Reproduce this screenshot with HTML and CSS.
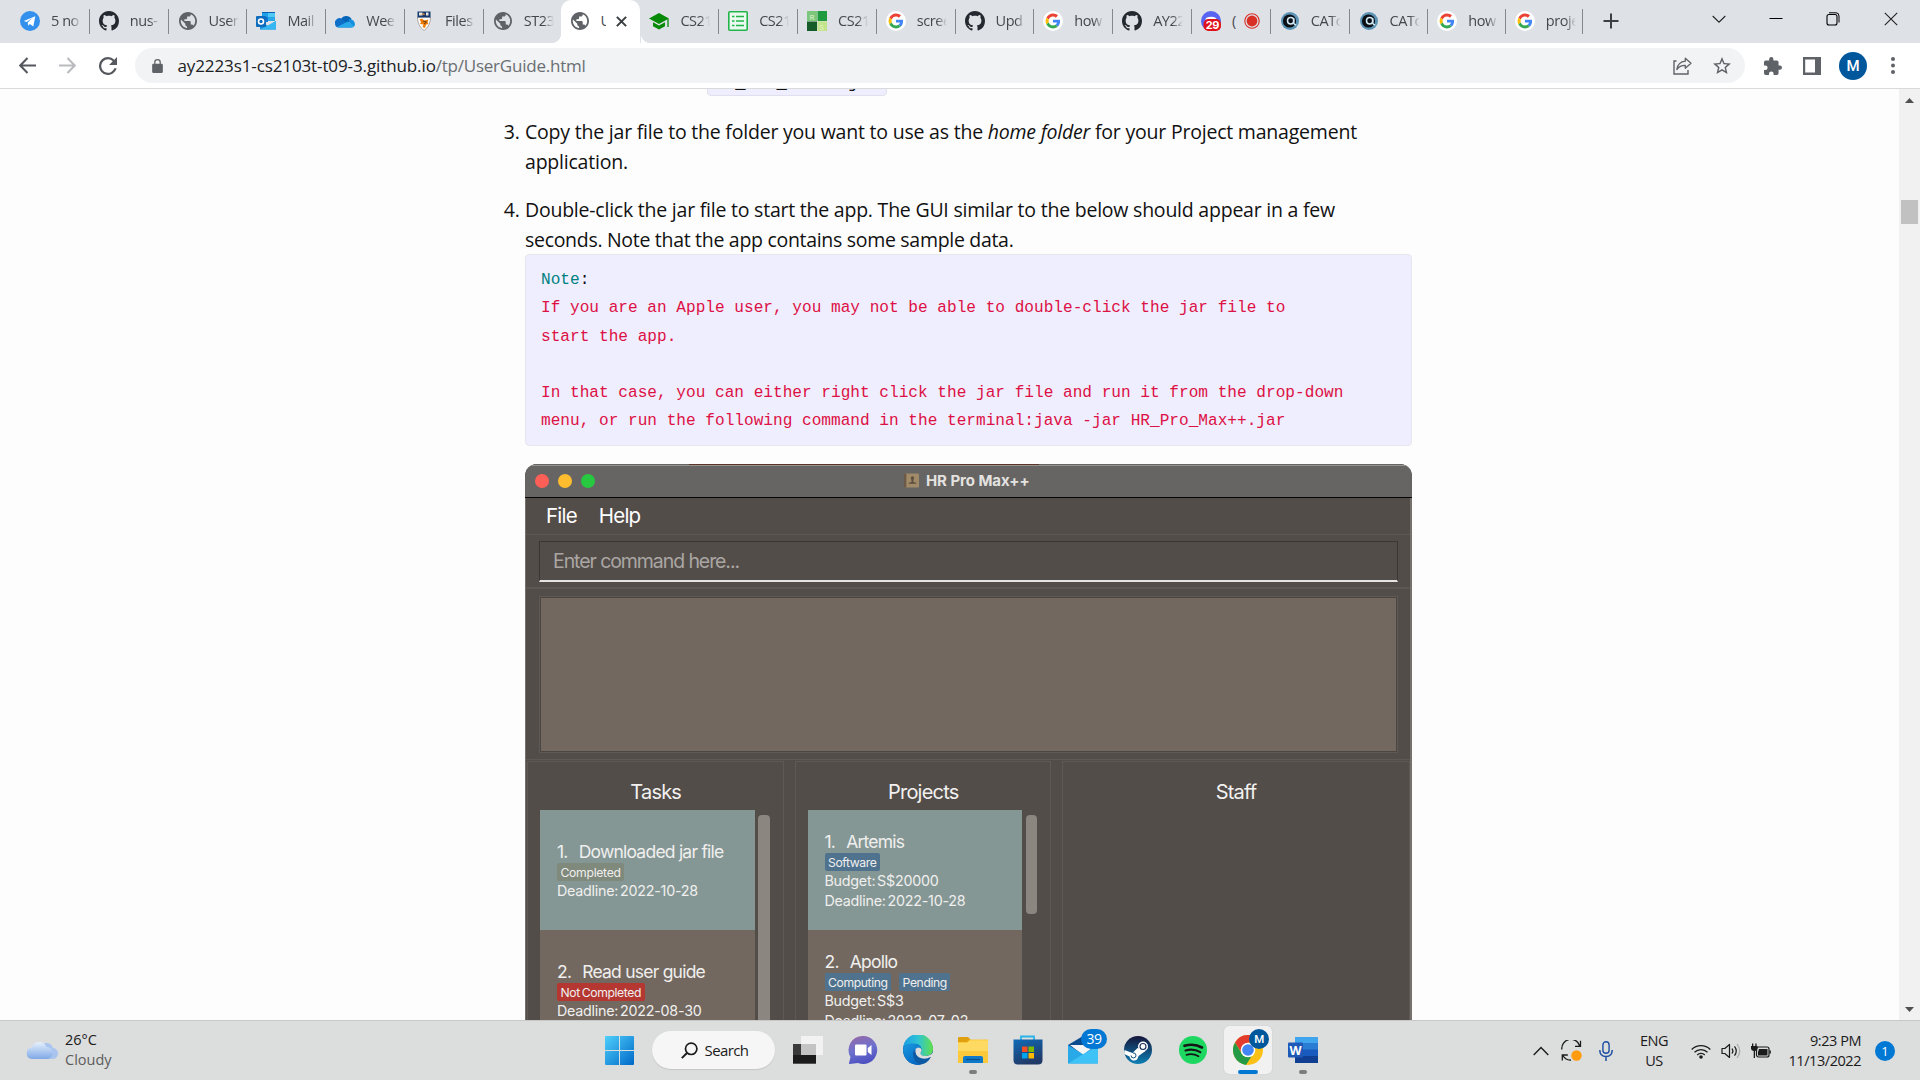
FILE: index.html
```html
<!DOCTYPE html>
<html lang="en">
<head>
<meta charset="utf-8">
<title>User Guide</title>
<link rel="stylesheet" href="styles.css">
</head>
<body>
<svg class="defs" aria-hidden="true">
  <symbol id="globe" viewBox="2 2 20 20"><path fill="#5f6368" d="M12 2C6.48 2 2 6.48 2 12s4.480 10 10 10 10-4.480 10-10S17.520 2 12 2zm-1 17.930c-3.950-.49-7-3.850-7-7.930 0-.62.08-1.210.21-1.790L9 15v1c0 1.100.9 2 2 2v1.930zm6.900-2.540c-.26-.81-1-1.390-1.900-1.390h-1v-3c0-.55-.45-1-1-1H8v-2h2c.55 0 1-.45 1-1V7h2c1.100 0 2-.9 2-2v-.41c2.930 1.190 5 4.060 5 7.410 0 2.080-.8 3.970-2.100 5.390z"/></symbol>
  <symbol id="github" viewBox="0 0 16 16"><path fill="#24292f" d="M8 0C3.58 0 0 3.58 0 8c0 3.54 2.29 6.53 5.47 7.59.4.07.55-.17.55-.38 0-.19-.01-.82-.01-1.49-2.01.37-2.53-.49-2.69-.94-.09-.23-.48-.94-.82-1.13-.28-.15-.68-.52-.01-.53.63-.01 1.08.58 1.23.82.72 1.21 1.87.87 2.33.66.07-.52.28-.87.51-1.07-1.78-.2-3.64-.89-3.64-3.95 0-.87.31-1.59.82-2.15-.08-.2-.36-1.02.08-2.12 0 0 .67-.21 2.2.82.64-.18 1.32-.27 2-.27s1.36.09 2 .27c1.53-1.04 2.2-.82 2.2-.82.44 1.1.16 1.92.08 2.12.51.56.82 1.27.82 2.15 0 3.07-1.87 3.75-3.65 3.95.29.25.54.73.54 1.48 0 1.07-.01 1.93-.01 2.2 0 .21.15.46.55.38A8.010 8.010 0 0 0 16 8c0-4.420-3.580-8-8-8z"/></symbol>
  <symbol id="google" viewBox="0 0 20 20"><circle cx="10" cy="10" r="10" fill="#fff"/><g transform="translate(2.600 2.600) scale(.308)"><path fill="#ea4335" d="M24 9.500c3.540 0 6.710 1.220 9.210 3.600l6.850-6.850C35.900 2.380 30.470 0 24 0 14.620 0 6.510 5.380 2.560 13.220l7.980 6.190C12.430 13.720 17.740 9.500 24 9.500z"/><path fill="#4285f4" d="M46.980 24.550c0-1.570-.15-3.090-.38-4.550H24v9.020h12.940c-.58 2.960-2.260 5.480-4.780 7.180l7.730 6c4.510-4.180 7.090-10.360 7.090-17.650z"/><path fill="#fbbc05" d="M10.530 28.590c-.48-1.450-.76-2.990-.76-4.590s.27-3.140.76-4.590l-7.980-6.190C.92 16.460 0 20.120 0 24s.92 7.540 2.560 10.780z"/><path fill="#34a853" d="M24 48c6.480 0 11.930-2.130 15.890-5.810l-7.730-6c-2.150 1.450-4.920 2.300-8.160 2.300-6.260 0-11.570-4.220-13.470-9.910l-7.980 6.190C6.510 42.620 14.620 48 24 48z"/></g></symbol>
  <symbol id="catcher" viewBox="0 0 20 20"><circle cx="10" cy="10" r="9" fill="#5b93b5"/><circle cx="9.500" cy="10" r="6.600" fill="#0b1016"/><circle cx="10.700" cy="9.800" r="3.200" fill="none" stroke="#d3eaf6" stroke-width="1.500"/><path d="M13.600 7v5q.5 1.500 2.600 2" stroke="#d3eaf6" stroke-width="1.500" fill="none"/></symbol>
</svg>

<header class="tabstrip">
  <div class="tab"><svg class="fav" viewBox="0 0 20 20"><circle cx="10" cy="10" r="10" fill="#3390ec"/><path fill="#fff" d="M3.800 9.900 15.300 5.200l-2 10.300-3.400-2.600-1.800 1.800-.3-3.200 4.800-4.400-6 3.900z"/></svg><span class="label">5 no</span></div>
  <div class="tab"><svg class="fav"><use href="#github"/></svg><span class="label">nus-</span></div>
  <div class="tab"><svg class="fav globe"><use href="#globe"/></svg><span class="label">User</span></div>
  <div class="tab"><svg class="fav" viewBox="0 0 20 20"><path fill="#0a5fb4" d="M6 1h13v9H6z"/><path fill="#1fa0e8" d="M6 2h6v4H6z"/><path fill="#50c8f4" d="M12 2h7v4h-7z"/><path fill="#0f78d4" d="M6 6h6v5H6z"/><path fill="#28a8ea" d="M12 6h7v4h-7z"/><path fill="#1a91df" d="m4 10 8 5 8-5v8.500H4z"/><path fill="#35b8f1" d="m4 18.500 16-8.500v8.500z"/><rect y="5" width="10" height="11" rx="1" fill="#0f6cbd"/><circle cx="5" cy="10.500" r="2.500" fill="none" stroke="#fff" stroke-width="1.600"/></svg><span class="label">Mail</span></div>
  <div class="tab"><svg class="fav" viewBox="0 0 20 20"><path fill="#0364b8" d="M6 8a6 6 0 0 1 10.500 0L13 14z"/><path fill="#1490df" d="M13.500 8.500A5 5 0 0 1 20 13a3.500 3.500 0 0 1-3 3.500z"/><path fill="#0f6fc8" d="M0 12.500A4.500 4.500 0 0 1 7 8l10 8.500H4a4 4 0 0 1-4-4z"/><path fill="#28a8ea" d="m2 16 11-5.500 6 4.500q-1 1.500-2.500 1.500H4z"/></svg><span class="label">Wee</span></div>
  <div class="tab"><svg class="fav" viewBox="0 0 20 20"><path fill="#fff" stroke="#8a7a68" stroke-width=".6" d="M3.500 6h13q0 9-6.500 13.500Q3.500 15 3.500 6z"/><path fill="#17386c" d="M3.500.5h13v6h-13z"/><path fill="#e8e4dc" d="M5 1.500h3.500v3H5zm7 0h2.500v3H12z"/><path fill="#d98a3a" d="M7 3.500 10 2l1 2z"/><path fill="#ef7c00" d="M5.500 8.500 8 7.500l2 2 4.500-1-1 2.500 1 2-2.500.8-1 3.200-2.500-1 1-2.500-3.500-.5 1-2z"/><path stroke="#3c2a18" stroke-width=".8" d="m9 10 3.500 1L10 13" fill="none"/></svg><span class="label">Files</span></div>
  <div class="tab last-before"><svg class="fav globe"><use href="#globe"/></svg><span class="label">ST23</span></div>
  <div class="tab active"><svg class="fav globe"><use href="#globe"/></svg><span class="label">U</span><svg class="tab-close" viewBox="0 0 10 10"><path d="m.8.8 8.400 8.400m0-8.400L.8 9.200" stroke="#3c4043" stroke-width="1.900"/></svg></div>
  <div class="tab"><svg class="fav" viewBox="0 0 20 20"><path fill="#078a07" d="m10 2 10 5.500-10 5.500L0 7.500z"/><path fill="#078a07" d="M4 11.200 10 14.500l6-3.300v4L10 18.500 4 15.200z"/><path stroke="#078a07" stroke-width="1.300" d="M19 8v8"/></svg><span class="label">CS21</span></div>
  <div class="tab"><svg class="fav" viewBox="0 0 20 20"><rect x=".8" y=".8" width="18.400" height="18.400" rx="1" fill="#eafaf0" stroke="#22b549" stroke-width="1.600"/><path stroke="#22b549" stroke-width="1.600" d="M4 5.500h2.500M4 10h2.500M4 14.500h2.500M8 5.500h8M8 10h8M8 14.500h8"/></svg><span class="label">CS21</span></div>
  <div class="tab"><svg class="fav" viewBox="0 0 20 20"><path fill="#7cc77c" d="M0 0h10v10H0z"/><path fill="#1f9a3f" d="M10.500 0H20v10h-9.500z"/><path fill="#155c29" d="M0 10.500h10V20H0z"/><path fill="#c2e58c" d="M10.500 10.500H20V20h-9.500z"/><text class="rs" x="2.500" y="8.500">R</text><text class="rs" x="12.500" y="18.600">S</text></svg><span class="label">CS21</span></div>
  <div class="tab"><svg class="fav"><use href="#google"/></svg><span class="label">scree</span></div>
  <div class="tab"><svg class="fav"><use href="#github"/></svg><span class="label">Upd</span></div>
  <div class="tab"><svg class="fav"><use href="#google"/></svg><span class="label">how</span></div>
  <div class="tab"><svg class="fav"><use href="#github"/></svg><span class="label">AY22</span></div>
  <div class="tab"><svg class="fav" viewBox="0 0 20 20"><circle cx="10" cy="10" r="10" fill="#5865f2"/><path fill="#fff" d="M5 7q5-2.500 10 0l1 4H4z"/><rect x="2.500" y="8" width="17.500" height="12" rx="5" fill="#e0101a"/><text class="count" x="11.300" y="18.300">29</text></svg><span class="label short">(</span><svg class="rec" viewBox="0 0 16 16"><circle cx="8" cy="8" r="7.200" fill="none" stroke="#d93025" stroke-width="1.100"/><circle cx="8" cy="8" r="5.400" fill="#d93025"/></svg></div>
  <div class="tab"><svg class="fav"><use href="#catcher"/></svg><span class="label">CATc</span></div>
  <div class="tab"><svg class="fav"><use href="#catcher"/></svg><span class="label">CATc</span></div>
  <div class="tab slim"><svg class="fav"><use href="#google"/></svg><span class="label">how</span></div>
  <div class="tab slim"><svg class="fav"><use href="#google"/></svg><span class="label">proje</span></div>
  <svg class="newtab" viewBox="0 0 16 16"><path d="M8 .5v15M.5 8h15" stroke="#3c4043" stroke-width="2"/></svg>
  <div class="winctl">
    <svg viewBox="0 0 14 14"><path d="m.7 4 6.300 6.200L13.300 4" fill="none" stroke="#222" stroke-width="1.100"/></svg>
    <svg viewBox="0 0 14 14"><path d="M.5 6.500h13" stroke="#000" stroke-width="1"/></svg>
    <svg viewBox="0 0 14 14"><rect x="1" y="2.500" width="10" height="10.500" rx="2" fill="none" stroke="#000" stroke-width="1.100"/><path d="M3 .8h7Q13 .8 13 4v6.500" fill="none" stroke="#000" stroke-width="1"/></svg>
    <svg viewBox="0 0 14 14"><path d="m.8.8 12.400 12.400m0-12.400L.8 13.200" stroke="#222" stroke-width="1.100"/></svg>
  </div>
</header>

<nav class="toolbar">
  <svg class="nav back" viewBox="0 0 16 16"><path d="M16 8H1.500M8 1 1.200 8 8 15" fill="none" stroke="#55595e" stroke-width="1.900"/></svg>
  <svg class="nav fwd" viewBox="0 0 16 16"><path d="M0 8h14.500M8 1l6.800 7L8 15" fill="none" stroke="#b9bbbe" stroke-width="1.900"/></svg>
  <svg class="nav reload" viewBox="4 4 16 16"><path fill="#55595e" d="M17.650 6.350A7.960 7.960 0 0 0 12 4a8 8 0 1 0 7.730 10h-2.080A6 6 0 1 1 12 6c1.660 0 3.140.69 4.220 1.780L13 11h7V4z"/></svg>
  <div class="omnibox">
    <svg class="lock" viewBox="4 1 16 21"><path fill="#5f6368" d="M18 8h-1V6A5 5 0 0 0 7 6v2H6a2 2 0 0 0-2 2v10a2 2 0 0 0 2 2h12a2 2 0 0 0 2-2V10a2 2 0 0 0-2-2zM8.900 8V6a3.100 3.100 0 0 1 6.200 0v2z"/></svg>
    <span class="url"><span class="host">ay2223s1-cs2103t-t09-3.github.io</span><span class="path">/tp/UserGuide.html</span></span>
    <svg class="share" viewBox="0 0 19 18"><path d="M3.500 4H1v13h14v-4" fill="none" stroke="#5f6368" stroke-width="1.400"/><path d="M12.300 1.200 18 6.300l-5.700 5V8.400Q7 8.200 3.800 12.500 5 5 12.300 4.200z" fill="none" stroke="#5f6368" stroke-width="1.300" stroke-linejoin="round"/></svg>
    <svg class="star" viewBox="2 2 20 19"><path fill="#5f6368" d="m22 9.240-7.190-.62L12 2 9.190 8.630 2 9.240l5.460 4.730L5.820 21 12 17.270 18.180 21l-1.630-7.030zM12 15.400l-3.760 2.270 1-4.280-3.320-2.880 4.380-.38L12 6.100l1.710 4.040 4.380.38-3.320 2.880 1 4.280z"/></svg>
  </div>
  <svg class="ext" viewBox="2 1 21 21"><path fill="#5f6368" d="M20.500 11H19V7a2 2 0 0 0-2-2h-4V3.500a2.500 2.500 0 0 0-5 0V5H4a2 2 0 0 0-2 2v3.800h1.500a2.700 2.700 0 0 1 0 5.400H2V20a2 2 0 0 0 2 2h3.800v-1.500a2.700 2.700 0 0 1 5.400 0V22H17a2 2 0 0 0 2-2v-4h1.500a2.500 2.500 0 0 0 0-5z"/></svg>
  <svg class="side" viewBox="0 0 18 18"><path fill="#5f6368" fill-rule="evenodd" d="M0 0h18v18H0zM2.200 2.500v13H12v-13z"/></svg>
  <span class="avatar">M</span>
  <svg class="more" viewBox="0 0 4 17"><g fill="#5f6368"><circle cx="2" cy="2" r="2"/><circle cx="2" cy="8.500" r="2"/><circle cx="2" cy="15" r="2"/></g></svg>
</nav>

<main class="viewport">
  <article class="doc">
    <code class="file">HR_Pro_Max++.jar</code>
    <ol start="3">
      <li><span class="l1">Copy the jar file to the folder you want to use as the <em>home folder</em> for your Project management</span><br><span class="l2">application.</span></li>
      <li><span class="l3">Double-click the jar file to start the app. The GUI similar to the below should appear in a few</span><br><span class="l4">seconds. Note that the app contains some sample data.</span>
        <pre class="note"><span class="key">Note</span><span class="colon">:</span>
If you are an Apple user, you may not be able to double-click the jar file to
start the app.

In that case, you can either right click the jar file and run it from the drop-down
menu, or run the following command in the terminal:java -jar HR_Pro_Max++.jar</pre>
        <section class="app">
          <div class="titlebar">
            <div class="lights"><i class="red"></i><i class="yellow"></i><i class="green"></i></div>
            <div class="title"><svg viewBox="0 0 16 15"><rect width="16" height="15" rx="1" fill="#a08a68"/><path fill="#6b5a48" d="M0 0h2.500v15H0z"/><path fill="#5d4e40" d="M9 3a2 2 0 0 1 1 3.600V9l3 .8V11H5V9.800L8 9V6.600A2 2 0 0 1 9 3z"/></svg><span>HR Pro Max++</span></div>
          </div>
          <div class="menu"><span class="m1">File</span><span class="m2">Help</span></div>
          <div class="cmd"><div class="input">Enter command here...</div></div>
          <div class="result"><div class="display"></div></div>
          <div class="columns">
            <div class="col">
              <h3>Tasks</h3>
              <div class="listrow">
                <div class="list">
                  <div class="card sel"><b><i>1.</i>Downloaded jar file</b><p class="tags"><u class="done">Completed</u></p><p>Deadline: 2022-10-28</p></div>
                  <div class="card"><b><i>2.</i>Read user guide</b><p class="tags"><u class="not">Not Completed</u></p><p>Deadline: 2022-08-30</p></div>
                </div>
                <div class="thumb"></div>
              </div>
            </div>
            <div class="col">
              <h3>Projects</h3>
              <div class="listrow">
                <div class="list">
                  <div class="card tall sel"><b><i>1.</i>Artemis</b><p class="tags"><u>Software</u></p><p>Budget: S$20000</p><p>Deadline: 2022-10-28</p></div>
                  <div class="card tall"><b><i>2.</i>Apollo</b><p class="tags"><u>Computing</u><u>Pending</u></p><p>Budget: S$3</p><p>Deadline: 2023-07-02</p></div>
                </div>
                <div class="thumb small"></div>
              </div>
            </div>
            <div class="col wide"><h3>Staff</h3></div>
          </div>
        </section>
      </li>
    </ol>
  </article>
  <aside class="scrollbar">
    <svg viewBox="0 0 9 5"><path fill="#505050" d="M0 5 4.500 0 9 5z"/></svg>
    <div class="handle"></div>
    <svg viewBox="0 0 9 5"><path fill="#505050" d="m0 0 4.500 5L9 0z"/></svg>
  </aside>
</main>

<footer class="taskbar">
  <div class="weather">
    <svg viewBox="0 0 32 22"><defs><linearGradient id="cl" x2="0" y2="1"><stop stop-color="#e6f0fc"/><stop offset="1" stop-color="#7fa9e6"/></linearGradient></defs><path fill="#a9c4ee" d="M14 9a7 7 0 0 1 13 1 5.500 5.500 0 0 1-1 11H14z"/><path fill="url(#cl)" d="M6 21a5.800 5.800 0 0 1-.5-11.500A8 8 0 0 1 20.500 9 6 6 0 0 1 21 21z"/></svg>
    <div><span>26°C</span><span class="dim">Cloudy</span></div>
  </div>
  <div class="apps">
    <div class="slot"><svg class="ico" viewBox="0 0 29 29"><defs><linearGradient id="wn" x2="1" y2="1"><stop stop-color="#4fd0fb"/><stop offset="1" stop-color="#0068c8"/></linearGradient></defs><path fill="url(#wn)" d="M1 0h13v14H0V1q0-1 1-1zm14 0h13q1 0 1 1v13H15zM0 15h14v14H1q-1 0-1-1zm15 0h14v13q0 1-1 1H15z"/></svg></div>
    <div class="search"><svg viewBox="0 0 17 17"><circle cx="10.200" cy="6.800" r="5.700" fill="none" stroke="#1b1b1b" stroke-width="1.700"/><path d="M6 11 .8 16.200" stroke="#1b1b1b" stroke-width="1.900"/></svg><span>Search</span></div>
    <div class="slot"><svg class="ico" viewBox="0 0 30 30"><path fill="#3a3a3a" d="M0 9h23v19.500H0z"/><path fill="#1c1c1c" d="M0 20h23v8.500H0z"/><path fill="#f6f6f6" fill-opacity=".85" d="M8 1h22v19H8z"/><path fill="#c4c4c4" d="M8 9h15v11H8z"/></svg></div>
    <div class="slot"><svg class="ico" viewBox="0 0 30 30"><defs><linearGradient id="ch" x1=".2" x2=".5" y2="1"><stop stop-color="#9469a8"/><stop offset=".5" stop-color="#6d72cf"/><stop offset="1" stop-color="#4c50c0"/></linearGradient></defs><path fill="url(#ch)" d="M15 1a14 14 0 1 1-5 27L1.500 29q-.8 0-.5-.9L2.500 22A14 14 0 0 1 15 1z"/><rect x="7" y="9.500" width="11.500" height="11" rx="1" fill="#fff"/><path fill="#fff" d="m19.800 13 3.700-3v10l-3.700-3z"/></svg></div>
    <div class="slot"><svg class="ico" viewBox="0 0 30 30"><defs><linearGradient id="e1" x2="1"><stop stop-color="#1b9de2"/><stop offset=".5" stop-color="#2fc3d6"/><stop offset="1" stop-color="#62e04a"/></linearGradient><linearGradient id="e2" x2=".6" y2="1"><stop stop-color="#1a9be0"/><stop offset="1" stop-color="#0668c4"/></linearGradient></defs><circle cx="15" cy="15" r="15" fill="#0c59a4"/><path fill="url(#e1)" d="M0 14A15 15 0 0 1 30 14q0 7-8 7-5 0-4.500-3 1.500-1.500 1-4Q17 8 9 9-.5 10 0 14z"/><path fill="url(#e2)" d="M0 15Q1 8 9 8.500 18 9 18.500 14 11 12 10 18.500 10 27 18 29.600 2 31 0 15z"/><path fill="#dcdcdc" d="M12.500 14q3-3 6 0 .5 2.500-1 4 0 3 5 3 5-.2 7.500-3.500V22h-2.500q-5 3-10 1-6-2.500-5-9z"/><path fill="#dcdcdc" d="M28 22.200 31 20v10l-6-3z"/></svg></div>
    <div class="slot open"><svg class="ico" viewBox="0 0 30 30"><path fill="#e0a010" d="M0 3q0-1 1-1h9l3 3-3 3H0z"/><path fill="#fcc93a" d="M0 7h9l3-2.500h18V28H0z"/><path fill="#ffda62" d="M0 8h9l3-2.500h18V16H0z"/><path fill="#0f79c9" d="M5 28v-5q0-2 2-2h16q2 0 2 2v5z"/><path stroke="#0a4f8c" stroke-width="1.200" d="M8 24.500h14"/></svg></div>
    <div class="slot"><svg class="ico" viewBox="0 0 30 30"><defs><linearGradient id="st" x2=".4" y2="1"><stop stop-color="#0f6bb8"/><stop offset="1" stop-color="#203a68"/></linearGradient></defs><path d="M8 6V1.500h13V6" fill="none" stroke="#28b4ea" stroke-width="1.800"/><path fill="url(#st)" d="M.5 4.500h29V25q0 4.500-4.500 4.500H5Q.5 29.500.5 25z"/><path fill="#f25022" d="M9 11.500h5.500V17H9z"/><path fill="#7fba00" d="M15.500 11.500H21V17h-5.500z"/><path fill="#00a4ef" d="M9 18h5.500v5.500H9z"/><path fill="#ffb900" d="M15.500 18H21v5.500h-5.500z"/></svg></div>
    <div class="slot"><svg class="ico" viewBox="0 0 30 30"><path fill="#0b4c8f" d="M0 10 15 1l15 9v8H0z"/><path fill="#f4f4f4" d="M2 10h26L15 20z"/><path fill="#2aa9e8" d="m0 10 30 18.500H0z"/><path fill="#3fc2f5" d="M30 10v18.500H0z"/></svg><span class="badge">39</span></div>
    <div class="slot"><svg class="ico" viewBox="0 0 30 30"><defs><linearGradient id="sm" x2="0" y2="1"><stop stop-color="#15153a"/><stop offset="1" stop-color="#0d80b5"/></linearGradient></defs><circle cx="15" cy="15" r="14" fill="url(#sm)"/><path fill="#fff" d="m1.500 15 8 3 5-5 8 3-7 5q-1 5-5 4.500-3-.3-4-4L1.200 19z"/><circle cx="20" cy="11.500" r="5" fill="#fff"/><circle cx="20" cy="11.500" r="3" fill="#fff" stroke="#1a2f5c" stroke-width="1.100"/><path d="M8 20.500a2.500 2.500 0 1 0 2-2.500" fill="none" stroke="#14527f" stroke-width="1"/></svg></div>
    <div class="slot"><svg class="ico" viewBox="0 0 30 30"><circle cx="15" cy="15" r="14" fill="#1ed760"/><g fill="none" stroke="#151515" stroke-linecap="round"><path d="M6.500 10.800q9.500-2.800 17.500 1.700" stroke-width="2.600"/><path d="M7.500 15.500q8-2.300 14.800 1.600" stroke-width="2.200"/><path d="M8.500 19.800q6.500-1.800 12 1.400" stroke-width="1.800"/></g></svg></div>
    <div class="slot current"><svg class="ico" viewBox="0 0 30 30"><circle cx="15" cy="15" r="15" fill="#fbc116"/><path fill="#e33b2e" d="M2 7.500A15 15 0 0 1 28 7.500H15L9 18.500z"/><path fill="#249a46" d="M2 7.500 9 19q2 3 6 3l3.500-.7L13 29.900A15 15 0 0 1 2 7.500z"/><circle cx="15" cy="15" r="7.300" fill="#fff"/><circle cx="15" cy="15" r="5.800" fill="#4285f4"/></svg><span class="badge user">M</span></div>
    <div class="slot open"><svg class="ico" viewBox="0 0 30 30"><path fill="#41a5ee" d="M7 2h23v7H7z"/><path fill="#2b7cd3" d="M7 8h23v7H7z"/><path fill="#185abd" d="M7 14.500h23v7H7z"/><path fill="#103f91" d="M7 21h23v7H7z"/><rect y="7.500" width="15" height="15" rx="1" fill="#1e59b8"/><text class="w" x="7.500" y="19.500">W</text></svg></div>
  </div>
  <div class="tray">
    <svg class="chev" viewBox="0 0 16 10"><path d="m.7 9 7.300-7.500L15.300 9" fill="none" stroke="#1b1b1b" stroke-width="1.400"/></svg>
    <svg class="sync" viewBox="0 0 21 21"><g fill="none" stroke="#1b1b1b" stroke-width="1.300"><path d="M.8 9.500A9.200 9.200 0 0 1 18.800 6M19.500.8v5.500H14M1.300 20.500V15h5.500M1.800 15.500q3.200 5 8.200 4.500"/></g><circle cx="15.500" cy="15.500" r="5.200" fill="#ff9b0f"/></svg>
    <svg class="mic" viewBox="0 0 14 20"><rect x="3.900" y=".8" width="6.200" height="11.500" rx="3.100" fill="none" stroke="#1d4fa3" stroke-width="1.400"/><path d="M.8 9q0 6.500 6.200 6.500T13.200 9M7 15.500V20" fill="none" stroke="#1d4fa3" stroke-width="1.500"/></svg>
    <div class="lang"><span>ENG</span><span>US</span></div>
    <svg class="wifi" viewBox="0 0 20 16"><g fill="none" stroke="#1b1b1b" stroke-width="1.300"><path d="M.7 6.500a13 13 0 0 1 18.600 0M3.500 9.300a9.200 9.200 0 0 1 13 0M6.200 12a5.400 5.400 0 0 1 7.600 0"/></g><circle cx="10" cy="14" r="1.800" fill="#1b1b1b"/></svg>
    <svg class="vol" viewBox="0 0 20 16"><g fill="none" stroke="#1b1b1b" stroke-width="1.200"><path d="M1 5.500h2.800L8.500 1.500v13L3.800 10.500H1z" stroke-linejoin="round"/><path d="M11 5.500q1.800 2.500 0 5M13.500 3.300q3.500 4.700 0 9.400"/><path stroke="#aaa" d="M16 1q5.500 7 0 14"/></g></svg>
    <svg class="bat" viewBox="0 0 20 16"><rect x="5.500" y="4" width="12.500" height="10" rx="2" fill="none" stroke="#1b1b1b" stroke-width="1.200"/><path fill="#1b1b1b" d="M8 6h8.500v6.500H7V9zM18.500 7q1.500 0 1.500 2t-1.500 2zM0 3h1V.5h1.300V3h2V.5h1.300V3h1v2.500Q6.600 7.500 4 8v7H2.700V8Q0 7.500 0 5.500z"/></svg>
    <div class="clock"><span>9:23 PM</span><span>11/13/2022</span></div>
    <span class="notif">1</span>
  </div>
</footer>
</body>
</html>
```
FILE: styles.css
```css
* { box-sizing: border-box; }
body { margin: 0; width: 1920px; height: 1080px; overflow: hidden; display: flex; flex-direction: column; font-family: "Open Sans", "Noto Sans", sans-serif; color: #111; background: #fdfdfd; }
svg { display: block; flex: none; }
.defs { position: absolute; width: 0; height: 0; }

/* tab strip */
.tabstrip { height: 43px; flex: none; background: #dee1e6; display: flex; align-items: flex-start; padding-left: 11px; }
.tab { width: 78.800px; height: 43px; flex: none; display: flex; align-items: center; padding: 0 0 1px 9px; position: relative; }
.tab::after { content: ""; position: absolute; right: 0; top: 9px; width: 1px; height: 25px; background: #85888c; }
.tab.slim { width: 77.500px; }
.tab.last-before::after, .tab.active::after { display: none; }
.fav { width: 20px; height: 20px; }
.fav.globe { width: 18px; height: 18px; margin: 0 1px; }
.label { width: 30px; margin-left: 11px; overflow: hidden; white-space: nowrap; font-size: 14.500px; letter-spacing: -.45px; line-height: 20px; color: #45494d; -webkit-mask-image: linear-gradient(90deg, #000 65%, transparent); mask-image: linear-gradient(90deg, #000 65%, transparent); }
.label.short { width: 7px; -webkit-mask-image: none; mask-image: none; }
.rec { width: 16px; height: 16px; margin-left: 5px; }
.tab.active { background: #fff; border-radius: 10px 10px 0 0; width: 79.800px; margin: 0 0 0 -2px; }
.tab.active::before { content: ""; position: absolute; left: -10px; bottom: 0; width: 100px; height: 10px; background: radial-gradient(circle at 0 0, transparent 10px, #fff 10.500px) left / 10px 10px no-repeat, radial-gradient(circle at 100% 0, transparent 10px, #fff 10.500px) right / 10px 10px no-repeat; }
.active .label { width: 5px; -webkit-mask-image: none; mask-image: none; margin-left: 11px; }
.tab-close { width: 11px; height: 11px; margin-left: 10px; }
.rs { font: 8px "Open Sans", sans-serif; fill: #e8f5d0; }
.count { font: bold 11px Inter, sans-serif; fill: #fff; text-anchor: middle; letter-spacing: -.5px; }
.newtab { width: 16px; height: 16px; margin: 13px 0 0 20px; }
.winctl { display: flex; gap: 43.300px; margin: 12px 0 0 92.500px; }
.winctl svg { width: 14px; height: 14px; }

/* toolbar */
.toolbar { height: 46px; flex: none; background: #fff; border-bottom: 1px solid #d9dadc; display: flex; align-items: center; padding-left: 19px; }
.nav { width: 17px; height: 17px; }
.fwd { margin-left: 23px; }
.reload { margin-left: 23px; width: 18px; height: 18px; }
.omnibox { height: 35px; width: 1610px; margin-left: 18px; border-radius: 18px; background: #f1f3f4; display: flex; align-items: center; padding: 0 14px 0 17px; }
.lock { width: 11px; height: 14px; }
.url { margin-left: 14.500px; font-size: 17px; line-height: 24px; flex: 1; color: #202124; white-space: nowrap; }
.host { letter-spacing: -.11px; }
.path { letter-spacing: -.23px; color: #6a6e73; }
.share { width: 19px; height: 18px; margin-right: 21px; }
.star { width: 18px; height: 17px; }
.ext { width: 18px; height: 18px; margin-left: 19px; }
.side { width: 18px; height: 18px; margin-left: 21px; }
.avatar { width: 28px; height: 28px; margin-left: 18px; border-radius: 50%; background: #01579b; color: #fff; font: 500 15px/28px Roboto, sans-serif; text-align: center; }
.more { width: 4px; height: 17px; margin-left: 23.500px; }

/* page */
.viewport { height: 931px; flex: none; display: flex; justify-content: space-between; overflow: hidden; }
.doc { width: 1412px; padding-left: 525px; height: 931px; overflow: hidden; }
.file { display: block; width: 180px; height: 29px; margin: -22px 0 0 182px; background: #eef; border: 1px solid #e0e0ee; border-radius: 4px; text-align: center; font: 17.160px/31px "Liberation Mono", monospace; color: #111; }
ol { margin: 21px 0 0; padding: 0; font-size: 19.500px; line-height: 30px; }
li { margin: 0 0 18px; white-space: nowrap; }
.l1, .l2 { letter-spacing: -.21px; }
.l3 { letter-spacing: -.225px; }
.l4 { letter-spacing: -.3px; }
.note { margin: -1px 0 18px; height: 192px; padding: 11px 15px; background: #eef; border: 1px solid #e6e6ee; border-radius: 4px; font: 16.110px/28.250px "Liberation Mono", monospace; color: #d14; }
.key { color: #008080; }
.colon { color: #111; }

/* desktop app window */
.app { width: 887px; height: 640px; background: #534d49; border: solid #77716c; border-width: 0 2px 0 1px; border-radius: 12px 12px 0 0; font-family: Inter, sans-serif; color: #eee; }
.titlebar { height: 34px; margin: 0 -2px 0 -1px; background: linear-gradient(#5a3424, #5a3424) 164px 0 / 350px 1px no-repeat, linear-gradient(#969390, #969390) 0 1px / 100% 1px no-repeat, #666563; border-bottom: 1px solid #050505; border-radius: 12px 12px 0 0; display: flex; align-items: center; justify-content: center; position: relative; }
.lights { position: absolute; left: 10px; top: 10px; display: flex; gap: 9px; }
.lights i { width: 14px; height: 14px; border-radius: 50%; background: #ff5f57; }
.lights .yellow { background: #febc2e; }
.lights .green { background: #28c840; }
.title { display: flex; align-items: center; gap: 6.500px; font-size: 15px; line-height: 18px; font-weight: 700; letter-spacing: -.05px; color: #e4e2e0; padding-right: 3px; }
.title svg { width: 15px; height: 15px; }
.menu { height: 37px; border-bottom: 1px solid #5e5854; display: flex; gap: 22px; padding-left: 20px; font-size: 20.500px; line-height: 35px; letter-spacing: -.8px; color: #fff; }
.cmd { height: 54px; border-bottom: 2px solid #5d5753; padding: 6px 12px 0 13px; }
.input { height: 41px; border: 1px solid #3c3532; border-bottom: 2px solid #e6e4e2; padding-left: 13px; font-size: 19.500px; line-height: 38px; letter-spacing: -1.080px; color: #aaa6a3; }
.result { height: 171px; border-bottom: 1px solid #5f5955; padding: 7px 12px 0 13px; }
.display { height: 157px; background: #72685f; border: 2px solid #5f5955; outline: 1px solid #4b4541; outline-offset: -2px; }
.columns { display: flex; gap: 11px; padding: 1px 0 0 1px; }
.col { width: 256.500px; height: 400px; flex: none; border: 1px solid #5f5955; padding: 15px 0 0 12px; }
.col.wide { width: 348px; padding-left: 0; }
.col h3 { margin: 0; font-size: 20px; line-height: 30px; font-weight: 400; letter-spacing: -.8px; text-align: center; color: #f2f1f0; padding-right: 11px; }
.col.wide h3 { padding-right: 0; }
.listrow { display: flex; gap: 3.500px; padding-top: 3px; }
.list { width: 214.500px; }
.card { height: 120px; background: #72685f; padding: 31px 0 0 17px; color: #f0efee; }
.card.tall { padding-top: 21px; }
.sel { background: #859795; }
.card b { display: flex; font-weight: 400; font-size: 17.500px; line-height: 22px; letter-spacing: -.77px; white-space: nowrap; }
.card b i { font-style: normal; margin-right: 11px; }
.card p { margin: 0; font-size: 14.300px; line-height: 20px; letter-spacing: -.24px; word-spacing: -2px; white-space: nowrap; }
.card .tags { display: flex; gap: 8px; height: 18px; }
.tags u { text-decoration: none; background: #4f738f; border-radius: 2px; padding: 0 3.500px; font-size: 12.200px; line-height: 19px; letter-spacing: -.4px; word-spacing: -1px; }
.tags .done { background: #7f897c; letter-spacing: -.3px; }
.tags .not { background: #b53732; }
.thumb { width: 11.500px; height: 300px; margin-top: 5px; border-radius: 4px; background: #8c8680; }
.thumb.small { height: 99px; }

/* page scrollbar */
.scrollbar { width: 21px; background: #f1f1f1; display: flex; flex-direction: column; align-items: center; padding: 9px 0 8px; }
.scrollbar svg { width: 9px; height: 5px; }
.scrollbar .handle { width: 17px; height: 24px; margin: 97px 0 auto; background: #c1c1c1; }

/* taskbar */
.taskbar { height: 60px; flex: none; background: #dcdddd; border-top: 1px solid #c8c8c8; display: flex; align-items: flex-start; font-size: 14.500px; line-height: 20px; color: #1b1b1b; }
.weather { width: 592px; display: flex; padding: 9px 0 0 26px; gap: 7px; }
.weather svg { width: 32px; height: 22px; margin-top: 8px; }
.weather div, .lang, .clock { display: flex; flex-direction: column; letter-spacing: -.45px; }
.weather div { letter-spacing: 0; }
.dim { color: #5c5c5c; }
.apps { display: flex; padding-top: 5px; }
.slot { width: 48px; height: 48px; margin-right: 7px; border-radius: 5px; display: flex; align-items: center; justify-content: center; position: relative; }
.slot:first-child { width: 55px; margin-right: 5px; }
.ico { width: 30px; height: 30px; }
.slot:first-child .ico { width: 29px; height: 29px; }
.search { width: 123px; height: 38px; margin: 5px 9px 0 0; border-radius: 19px; background: #f6f6f6; box-shadow: 0 1px 1px #c6c6c6; display: flex; align-items: center; gap: 6.500px; padding-left: 29px; font-size: 15px; letter-spacing: -.6px; }
.search svg { width: 17px; height: 17px; }
.slot.current { background: #f1f1f1; box-shadow: 0 0 1px #b5b5b5; }
.slot.open::after, .slot.current::after { content: ""; position: absolute; bottom: 0; width: 8px; height: 4px; border-radius: 2px; background: #7c7c7c; }
.slot.current::after { width: 20px; background: #0078d4; }
.badge { position: absolute; left: 22px; top: 3px; width: 26px; height: 20px; border-radius: 10px; background: #0078d4; color: #fff; font-size: 14px; line-height: 20px; text-align: center; letter-spacing: -.5px; }
.badge.user { left: 25px; width: 20px; background: #01579b; font: 500 11.500px/20px Roboto, sans-serif; }
.w { font: bold 12.500px "Open Sans", sans-serif; fill: #fff; text-anchor: middle; }
.tray { margin-left: auto; display: flex; align-items: center; height: 59px; padding-right: 25px; }
.chev { width: 16px; height: 10px; }
.sync { width: 21px; height: 21px; margin-left: 12px; }
.mic { width: 14px; height: 20px; margin-left: 17px; }
.lang { width: 40px; margin-left: 21px; text-align: center; }
.wifi { width: 20px; height: 16px; margin-left: 17px; }
.vol { width: 20px; height: 16px; margin-left: 10px; }
.bat { width: 20px; height: 16px; margin-left: 10px; }
.clock { width: 80px; margin-left: 10px; text-align: right; white-space: nowrap; }
.notif { width: 20px; height: 20px; margin-left: 14px; border-radius: 50%; background: #0078d4; color: #fff; text-align: center; font-size: 13px; }
```
